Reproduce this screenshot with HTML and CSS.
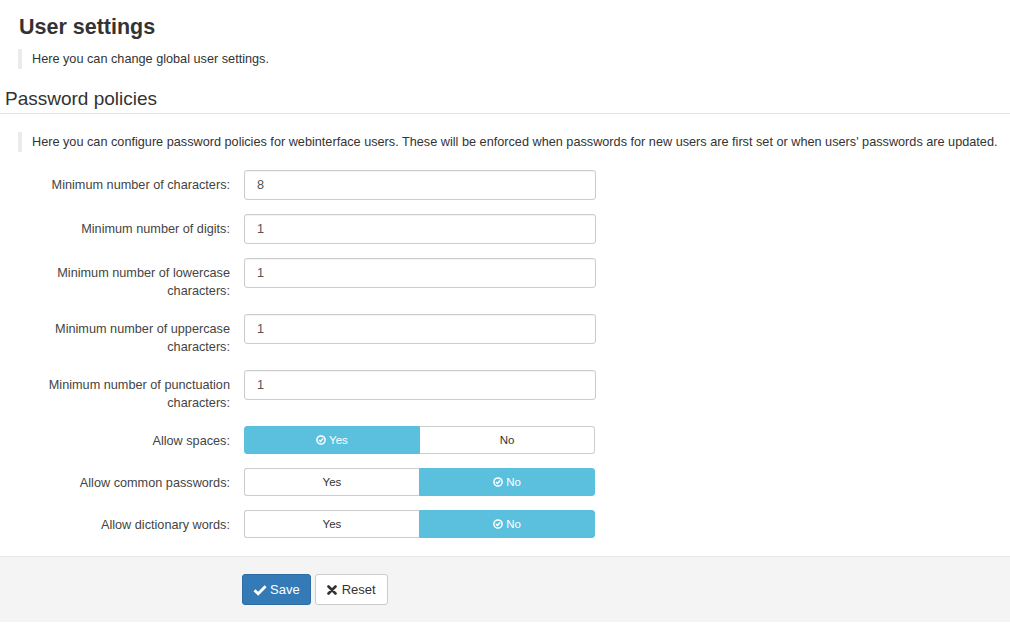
FILE: index.html
```html
<!DOCTYPE html>
<html>
<head>
<meta charset="utf-8">
<link rel="stylesheet" href="styles.css">
</head>
<body>
<div class="page">
  <h1 class="title">User settings</h1>
  <blockquote class="note note-first">Here you can change global user settings.</blockquote>
  <h2 class="section">Password policies</h2>
  <blockquote class="note">Here you can configure password policies for webinterface users. These will be enforced when passwords for new users are first set or when users' passwords are updated.</blockquote>
  <form class="form">
    <div class="row">
      <label class="label">Minimum number of characters:</label>
      <input class="input" type="text" value="8">
    </div>
    <div class="row">
      <label class="label">Minimum number of digits:</label>
      <input class="input" type="text" value="1">
    </div>
    <div class="row">
      <label class="label">Minimum number of lowercase characters:</label>
      <input class="input" type="text" value="1">
    </div>
    <div class="row">
      <label class="label">Minimum number of uppercase characters:</label>
      <input class="input" type="text" value="1">
    </div>
    <div class="row">
      <label class="label">Minimum number of punctuation characters:</label>
      <input class="input" type="text" value="1">
    </div>
    <div class="row">
      <label class="label">Allow spaces:</label>
      <div class="toggle">
        <span class="seg seg-on"><svg class="ico" viewBox="0 0 10 10"><circle cx="5" cy="5" r="4.1" fill="none" stroke="#fff" stroke-width="1.5"/><path d="M3 5.1 L4.5 6.5 L7.1 3.6" fill="none" stroke="#fff" stroke-width="1.5"/></svg>Yes</span>
        <span class="seg seg-off">No</span>
      </div>
    </div>
    <div class="row">
      <label class="label">Allow common passwords:</label>
      <div class="toggle">
        <span class="seg seg-off">Yes</span>
        <span class="seg seg-on"><svg class="ico" viewBox="0 0 10 10"><circle cx="5" cy="5" r="4.1" fill="none" stroke="#fff" stroke-width="1.5"/><path d="M3 5.1 L4.5 6.5 L7.1 3.6" fill="none" stroke="#fff" stroke-width="1.5"/></svg>No</span>
      </div>
    </div>
    <div class="row">
      <label class="label">Allow dictionary words:</label>
      <div class="toggle">
        <span class="seg seg-off">Yes</span>
        <span class="seg seg-on"><svg class="ico" viewBox="0 0 10 10"><circle cx="5" cy="5" r="4.1" fill="none" stroke="#fff" stroke-width="1.5"/><path d="M3 5.1 L4.5 6.5 L7.1 3.6" fill="none" stroke="#fff" stroke-width="1.5"/></svg>No</span>
      </div>
    </div>
  </form>
  <div class="actions">
    <button class="btn btn-primary" type="button"><svg class="bico" viewBox="0 0 14 12"><path d="M1.5 6.3 L5.2 9.8 L12.6 2.2" fill="none" stroke="#fff" stroke-width="2.8" stroke-linejoin="miter"/></svg>Save</button>
    <button class="btn btn-default" type="button"><svg class="bico-x" viewBox="0 0 10 10"><path d="M1.5 1.5 L8.5 8.5 M8.5 1.5 L1.5 8.5" stroke="#333" stroke-width="2.6" stroke-linecap="round"/></svg>Reset</button>
  </div>
</div>
</body>
</html>
```

FILE: styles.css
```css
* { box-sizing: border-box; }
html, body { margin: 0; padding: 0; background: #fff; }
body {
  font-family: "Liberation Sans", Arial, sans-serif;
  font-size: 12.7px;
  color: #333;
}
.page { display: flex; flex-direction: column; }
.title {
  margin: 0;
  padding: 15px 0 0 19px;
  font-size: 21.5px;
  line-height: 24px;
  font-weight: bold;
  color: #333;
}
.note {
  margin: 10px 0 0 18px;
  padding-left: 10px;
  border-left: 4px solid #ebebeb;
  line-height: 20px;
  font-size: 12.7px;
  color: #333;
}
.note-first { margin-top: 10px; }
.section {
  margin: 19px 0 0 0;
  padding: 0 0 3px 5px;
  font-size: 19px;
  line-height: 22px;
  font-weight: normal;
  color: #333;
  border-bottom: 1px solid #e5e5e5;
}
.section + .note { margin-top: 18px; }
.form {
  margin-top: 18px;
  display: flex;
  flex-direction: column;
  gap: 14px;
}
.row { display: flex; align-items: flex-start; }
.label {
  width: 244px;
  flex: none;
  padding: 6px 14px 0 40px;
  text-align: right;
  line-height: 18px;
  color: #444;
}
.input {
  width: 352px;
  height: 30px;
  border: 1px solid #ccc;
  border-radius: 3px;
  padding: 0 12px;
  font-family: inherit;
  font-size: 12.7px;
  color: #555;
  box-shadow: inset 0 1px 1px rgba(0,0,0,0.05);
  margin: 0;
}
.toggle {
  width: 351px;
  height: 28px;
  display: flex;
}
.seg {
  flex: 1;
  display: flex;
  align-items: center;
  justify-content: center;
  font-size: 11.5px;
  gap: 3px;
}
.seg-on { background: #5bc0de; color: #fff; border: 1px solid #5bc0de; }
.seg-off { background: #fff; color: #333; border: 1px solid #ccc; }
.seg:first-child { border-radius: 3px 0 0 3px; }
.seg:last-child { border-radius: 0 3px 3px 0; }
.seg-off:first-child { border-right: none; }
.seg-off:last-child { border-left: none; }
.ico { width: 10px; height: 10px; }
.actions {
  margin-top: 18px;
  background: #f4f4f4;
  border-top: 1px solid #e8e8e8;
  padding: 17px 0 17px 242px;
  display: flex;
  gap: 4px;
}
.btn {
  height: 31px;
  padding: 0 10px;
  border-radius: 3px;
  font-family: inherit;
  font-size: 13px;
  display: flex;
  align-items: center;
  gap: 3px;
  margin: 0;
}
.btn-primary { background: #337ab7; border: 1px solid #2e6da4; color: #fff; }
.btn-default { background: #fff; border: 1px solid #ccc; color: #333; padding: 0 11px; }
.bico { width: 14px; height: 12px; }
.bico-x { width: 10px; height: 10px; margin-right: 2px; }
```
